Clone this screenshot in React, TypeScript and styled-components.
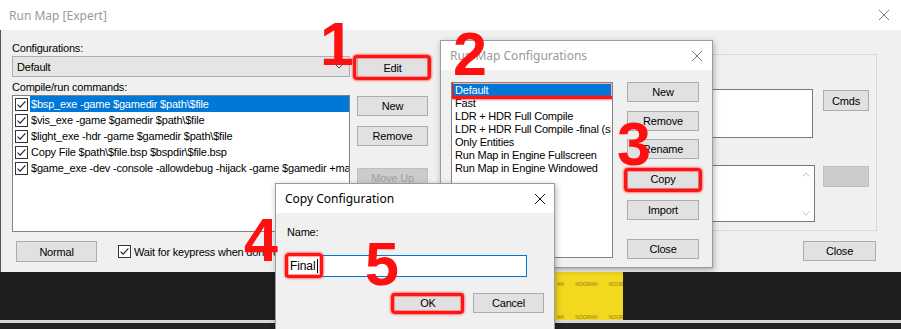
import React from "react";
import styled, { createGlobalStyle } from "styled-components";

const UI_FONT = `"Liberation Sans", Arial, sans-serif`;
const TITLE_FONT = `"Noto Sans", "Liberation Sans", sans-serif`;

const commands = [
  "$bsp_exe -game $gamedir $path\\$file",
  "$vis_exe -game $gamedir $path\\$file",
  "$light_exe -hdr -game $gamedir $path\\$file",
  "Copy File $path\\$file.bsp $bspdir\\$file.bsp",
  "$game_exe -dev -console -allowdebug -hijack -game $gamedir +map $file",
];

const configs = [
  "Default",
  "Fast",
  "LDR + HDR Full Compile",
  "LDR + HDR Full Compile -final (slow)",
  "Only Entities",
  "Run Map in Engine Fullscreen",
  "Run Map in Engine Windowed",
];

const GlobalStyle = createGlobalStyle`
  html, body {
    margin: 0;
    padding: 0;
  }
  body {
    width: 901px;
    height: 329px;
    overflow: hidden;
    background: #1d1d1d;
    font-family: ${UI_FONT};
  }
`;

const Desktop = styled.div`
  position: relative;
  width: 901px;
  height: 329px;
  overflow: hidden;
  display: flex;
  flex-direction: column;
  background: #1d1d1d;
`;

/* ---------- window chrome ---------- */

const TitleBar = styled.div<{ $h?: number; $pad?: number }>`
  display: flex;
  align-items: center;
  justify-content: space-between;
  height: ${p => p.$h ?? 30}px;
  padding: 0 ${p => p.$pad ?? 11}px 0 9px;
  background: #fff;
  flex-shrink: 0;
`;

const TitleText = styled.span<{ $active?: boolean }>`
  font: 12px ${TITLE_FONT};
  color: ${p => (p.$active ? "#000" : "#9a9a9a")};
  white-space: nowrap;
`;

const MainWindow = styled.div`
  display: flex;
  flex-direction: column;
  height: 272px;
  flex-shrink: 0;
  background: #f0f0f0;
  box-shadow: inset 1px 0 #555;
`;

const MainBody = styled.div`
  display: flex;
  flex-direction: column;
  flex: 1;
`;

const TopArea = styled.div`
  display: flex;
  align-items: flex-start;
`;

const CommandsColumn = styled.div`
  display: flex;
  flex-direction: column;
  width: 338px;
  margin-left: 12px;
  padding-top: 12px;
`;

const FieldLabel = styled.div<{ $mt?: number; $ml?: number }>`
  font-size: 11px;
  letter-spacing: -0.2px;
  line-height: 13px;
  color: #000;
  margin-top: ${p => p.$mt ?? 0}px;
  margin-left: ${p => p.$ml ?? 0}px;
  white-space: nowrap;
`;

const Combo = styled.div`
  box-sizing: border-box;
  display: flex;
  align-items: center;
  justify-content: space-between;
  height: 21px;
  margin-top: 1px;
  padding: 0 6px 0 4px;
  background: #e5e5e5;
  border: 1px solid #adadad;
  font-size: 11px;
  letter-spacing: -0.2px;
`;

const ListBox = styled.div<{ $w?: number; $h: number; $pad?: number }>`
  box-sizing: border-box;
  width: ${p => (p.$w ? `${p.$w}px` : "auto")};
  height: ${p => p.$h}px;
  margin-top: 1px;
  padding-top: ${p => p.$pad ?? 0}px;
  background: #fff;
  border: 1px solid #828282;
  overflow: hidden;
  flex-shrink: 0;
`;

const CommandRow = styled.div`
  display: flex;
  align-items: center;
  gap: 2px;
  height: 16px;
  padding-left: 2px;
`;

const RowText = styled.span<{ $selected?: boolean; $h?: number; $pad?: number }>`
  flex: 1;
  height: ${p => p.$h ?? 16}px;
  line-height: ${p => p.$h ?? 16}px;
  padding-left: ${p => p.$pad ?? 1}px;
  font-size: 11px;
  letter-spacing: -0.2px;
  white-space: nowrap;
  overflow: hidden;
  color: ${p => (p.$selected ? "#fff" : "#000")};
  background: ${p => (p.$selected ? "#0078d7" : "transparent")};
`;

const ButtonColumn = styled.div`
  display: flex;
  flex-direction: column;
  width: 71px;
  margin-left: 7px;
  padding-top: 27px;
`;

const Button = styled.div<{ $w?: number; $h?: number; $mt?: number; $off?: boolean }>`
  box-sizing: border-box;
  display: flex;
  align-items: center;
  justify-content: center;
  width: ${p => p.$w ?? 72}px;
  height: ${p => p.$h ?? 20}px;
  margin-top: ${p => p.$mt ?? 0}px;
  font-size: 11px;
  letter-spacing: -0.2px;
  color: ${p => (p.$off ? "#a0a0a0" : "#000")};
  background: ${p => (p.$off ? "#cccccc" : "#e1e1e1")};
  border: 1px solid ${p => (p.$off ? "#bfbfbf" : "#adadad")};
  flex-shrink: 0;
`;

const ParamsGroup = styled.div`
  box-sizing: border-box;
  width: 432px;
  height: 177px;
  margin: 24px 0 0 17px;
  padding-right: 7px;
  border: 1px solid #d8d8d8;
  display: flex;
  flex-direction: column;
  align-items: flex-end;
`;

const ParamRow = styled.div<{ $mt: number }>`
  display: flex;
  align-items: flex-start;
  margin-top: ${p => p.$mt}px;
`;

const TextBox = styled.div<{ $w: number; $h: number; $mr: number }>`
  box-sizing: border-box;
  position: relative;
  width: ${p => p.$w}px;
  height: ${p => p.$h}px;
  margin-right: ${p => p.$mr}px;
  background: #fff;
  border: 1px solid #7a7a7a;
`;

const ScrollTrack = styled.div`
  position: absolute;
  top: 0;
  right: 0;
  bottom: 0;
  width: 17px;
  display: flex;
  flex-direction: column;
  align-items: center;
  justify-content: space-between;
  padding: 6px 0 5px;
  box-sizing: border-box;
`;

const BottomRow = styled.div`
  display: flex;
  align-items: center;
  margin-top: 9px;
  padding-left: 16px;
`;

const CheckLabel = styled.label`
  display: flex;
  align-items: center;
  gap: 3px;
  margin-left: 21px;
  font-size: 11px;
  letter-spacing: -0.2px;
  white-space: nowrap;
`;

const CloseSlot = styled.div`
  margin-left: auto;
  margin-right: 25px;
  margin-top: -2px;
`;

/* ---------- desktop strip below ---------- */

const Backdrop = styled.div`
  display: flex;
  height: 48px;
  background: #1e1e1f;
  flex-shrink: 0;
`;

const YellowPanel = styled.div`
  width: 70px;
  margin-left: 553px;
  background: #f2d81e;
  display: flex;
  flex-direction: column;
  justify-content: space-between;
  padding: 9px 0 0 4px;
  box-sizing: border-box;
  overflow: hidden;
`;

const TinyText = styled.div`
  font-size: 5px;
  color: #8a7a20;
  white-space: nowrap;
  word-spacing: 10px;
`;

const Ledge = styled.div`
  height: 3px;
  background: #d8d8d8;
  flex-shrink: 0;
`;

const DeepDark = styled.div`
  flex: 1;
  background: #232323;
`;

/* ---------- floating dialogs ---------- */

const Dialog = styled.div<{ $x: number; $y: number; $w: number; $h: number }>`
  position: absolute;
  left: ${p => p.$x}px;
  top: ${p => p.$y}px;
  width: ${p => p.$w}px;
  height: ${p => p.$h}px;
  box-sizing: border-box;
  display: flex;
  flex-direction: column;
  background: #f0f0f0;
  border: 1px solid #9c9c9c;
  box-shadow: 1px 2px 6px rgba(0, 0, 0, 0.3);
`;

const ConfigBody = styled.div`
  display: flex;
  align-items: flex-start;
  padding: 11px 0 0 10px;
`;

const ConfigButtons = styled.div`
  display: flex;
  flex-direction: column;
  height: 177px;
  margin-left: 14px;
  padding-top: 1px;
`;

const ConfigRow = styled.div`
  display: flex;
  padding: 0 1px;
`;

const CopyBody = styled.div`
  display: flex;
  flex-direction: column;
  padding: 13px 10px 0 9px;
`;

const NameInput = styled.div`
  box-sizing: border-box;
  display: flex;
  align-items: center;
  width: 242px;
  height: 22px;
  margin-top: 16px;
  background: #fff;
  border: 1px solid #0078d7;
`;

const InputValue = styled.span`
  display: flex;
  align-items: center;
  height: 20px;
  padding: 0 3px 0 4px;
  font-size: 12px;
  letter-spacing: -0.1px;
`;

const Caret = styled.span`
  width: 1px;
  height: 14px;
  margin-left: 1px;
  background: #000;
`;

const DialogButtons = styled.div`
  display: flex;
  justify-content: flex-end;
  gap: 9px;
  margin-top: 16px;
`;

/* ---------- annotations ---------- */

const Mark = styled.div<{ $t?: number; $r?: number; $b?: number; $l?: number; $inline?: boolean }>`
  position: relative;
  display: ${p => (p.$inline ? "inline-flex" : "block")};
  &::after {
    content: "";
    position: absolute;
    top: ${p => -(p.$t ?? 2)}px;
    right: ${p => -(p.$r ?? 3)}px;
    bottom: ${p => -(p.$b ?? 2)}px;
    left: ${p => -(p.$l ?? 3)}px;
    border: 3px solid #ff1414;
    border-radius: 4px;
    box-shadow: 0 0 2px 1px rgba(255, 30, 30, 0.55), inset 0 0 1px 1px rgba(255, 30, 30, 0.4);
    pointer-events: none;
  }
`;

const Step = styled.div<{ $x: number; $y: number }>`
  position: absolute;
  left: ${p => p.$x}px;
  top: ${p => p.$y}px;
  font: bold 61px/61px ${UI_FONT};
  color: #ff0f0f;
  pointer-events: none;
`;

/* ---------- icons ---------- */

const CloseIcon = ({ color }: { color: string }) => (
  <svg width="10" height="10" viewBox="0 0 10 10">
    <path d="M0 0L10 10M10 0L0 10" stroke={color} strokeWidth="1" />
  </svg>
);

const Chevron = ({ up, color }: { up?: boolean; color: string }) => (
  <svg width="8" height="5" viewBox="0 0 8 5">
    <path d={up ? "M0.5 4.5L4 1L7.5 4.5" : "M0.5 0.5L4 4L7.5 0.5"} fill="none" stroke={color} strokeWidth="1" />
  </svg>
);

const CheckBox = () => (
  <svg width="13" height="13" viewBox="0 0 13 13">
    <rect x="0.5" y="0.5" width="12" height="12" fill="#fff" stroke="#333" />
    <path d="M2.6 6.6L5.1 9.1L10.4 3.4" fill="none" stroke="#222" strokeWidth="1.2" />
  </svg>
);

const App = () => {
  return (
    <Desktop>
      <GlobalStyle />

      <MainWindow>
        <TitleBar $pad={12}>
          <TitleText>Run Map [Expert]</TitleText>
          <CloseIcon color="#7a7a7a" />
        </TitleBar>
        <MainBody>
          <TopArea>
            <CommandsColumn>
              <FieldLabel>Configurations:</FieldLabel>
              <Combo>
                Default
                <Chevron color="#444" />
              </Combo>
              <FieldLabel $mt={4}>Compile/run commands:</FieldLabel>
              <ListBox $h={137}>
                {commands.map((cmd, idx) => (
                  <CommandRow key={idx}>
                    <CheckBox />
                    <RowText $selected={idx === 0}>{cmd}</RowText>
                  </CommandRow>
                ))}
              </ListBox>
            </CommandsColumn>

            <ButtonColumn>
              <Mark $t={2} $r={3} $b={2} $l={4}>
                <Button $w={71} $h={21}>Edit</Button>
              </Mark>
              <Button $w={71} $mt={18}>New</Button>
              <Button $w={71} $mt={10}>Remove</Button>
              <Button $w={71} $mt={22} $off>Move Up</Button>
            </ButtonColumn>

            <ParamsGroup>
              <ParamRow $mt={34}>
                <TextBox $w={300} $h={49} $mr={10} />
                <Button $w={46} $h={21} $mt={1}>Cmds</Button>
              </ParamRow>
              <ParamRow $mt={27}>
                <TextBox $w={300} $h={57} $mr={8}>
                  <ScrollTrack>
                    <Chevron up color="#c2c2c2" />
                    <Chevron color="#c2c2c2" />
                  </ScrollTrack>
                </TextBox>
                <Button $w={46} $h={21} $mt={1} $off />
              </ParamRow>
            </ParamsGroup>
          </TopArea>

          <BottomRow>
            <Button $w={81} $h={21}>Normal</Button>
            <CheckLabel>
              <CheckBox />
              Wait for keypress when done compiling
            </CheckLabel>
            <CloseSlot>
              <Button $w={73}>Close</Button>
            </CloseSlot>
          </BottomRow>
        </MainBody>
      </MainWindow>

      <Backdrop>
        <YellowPanel>
          <TinyText>AH NOORAH NOORAH</TinyText>
          <TinyText>AH NOORAH NOORAH</TinyText>
        </YellowPanel>
      </Backdrop>
      <Ledge />
      <DeepDark />

      <Dialog $x={440} $y={40} $w={273} $h={228}>
        <TitleBar $h={29} $pad={10}>
          <TitleText>Run Map Configurations</TitleText>
          <CloseIcon color="#7a7a7a" />
        </TitleBar>
        <ConfigBody>
          <ListBox $w={162} $h={176} $pad={1}>
            {configs.map((name, idx) =>
              idx === 0 ? (
                <Mark key={idx} $t={4} $r={3} $b={2} $l={2}>
                  <ConfigRow>
                    <RowText $selected $h={13} $pad={2}>{name}</RowText>
                  </ConfigRow>
                </Mark>
              ) : (
                <ConfigRow key={idx}>
                  <RowText $h={13} $pad={2}>{name}</RowText>
                </ConfigRow>
              )
            )}
          </ListBox>
          <ConfigButtons>
            <Button>New</Button>
            <Button $mt={9}>Remove</Button>
            <Button $mt={8}>Rename</Button>
            <Mark $t={1} $r={3} $b={3} $l={3} style={{ marginTop: 10 }}>
              <Button>Copy</Button>
            </Mark>
            <Button $mt={11}>Import</Button>
            <Button style={{ marginTop: "auto" }}>Close</Button>
          </ConfigButtons>
        </ConfigBody>
      </Dialog>

      <Dialog $x={275} $y={183} $w={280} $h={150}>
        <TitleBar $h={29} $pad={9}>
          <TitleText $active>Copy Configuration</TitleText>
          <CloseIcon color="#111" />
        </TitleBar>
        <CopyBody>
          <FieldLabel $ml={2}>Name:</FieldLabel>
          <NameInput>
            <Mark $inline $t={3} $r={2} $b={2} $l={1}>
              <InputValue>
                Final
                <Caret />
              </InputValue>
            </Mark>
          </NameInput>
          <DialogButtons>
            <Mark $t={0} $r={0} $b={1} $l={1}>
              <Button>OK</Button>
            </Mark>
            <Button $w={71}>Cancel</Button>
          </DialogButtons>
        </CopyBody>
      </Dialog>

      <Step $x={320} $y={14}>1</Step>
      <Step $x={453} $y={24}>2</Step>
      <Step $x={617} $y={114}>3</Step>
      <Step $x={244} $y={210}>4</Step>
      <Step $x={365} $y={234}>5</Step>
    </Desktop>
  );
};

export default App;
